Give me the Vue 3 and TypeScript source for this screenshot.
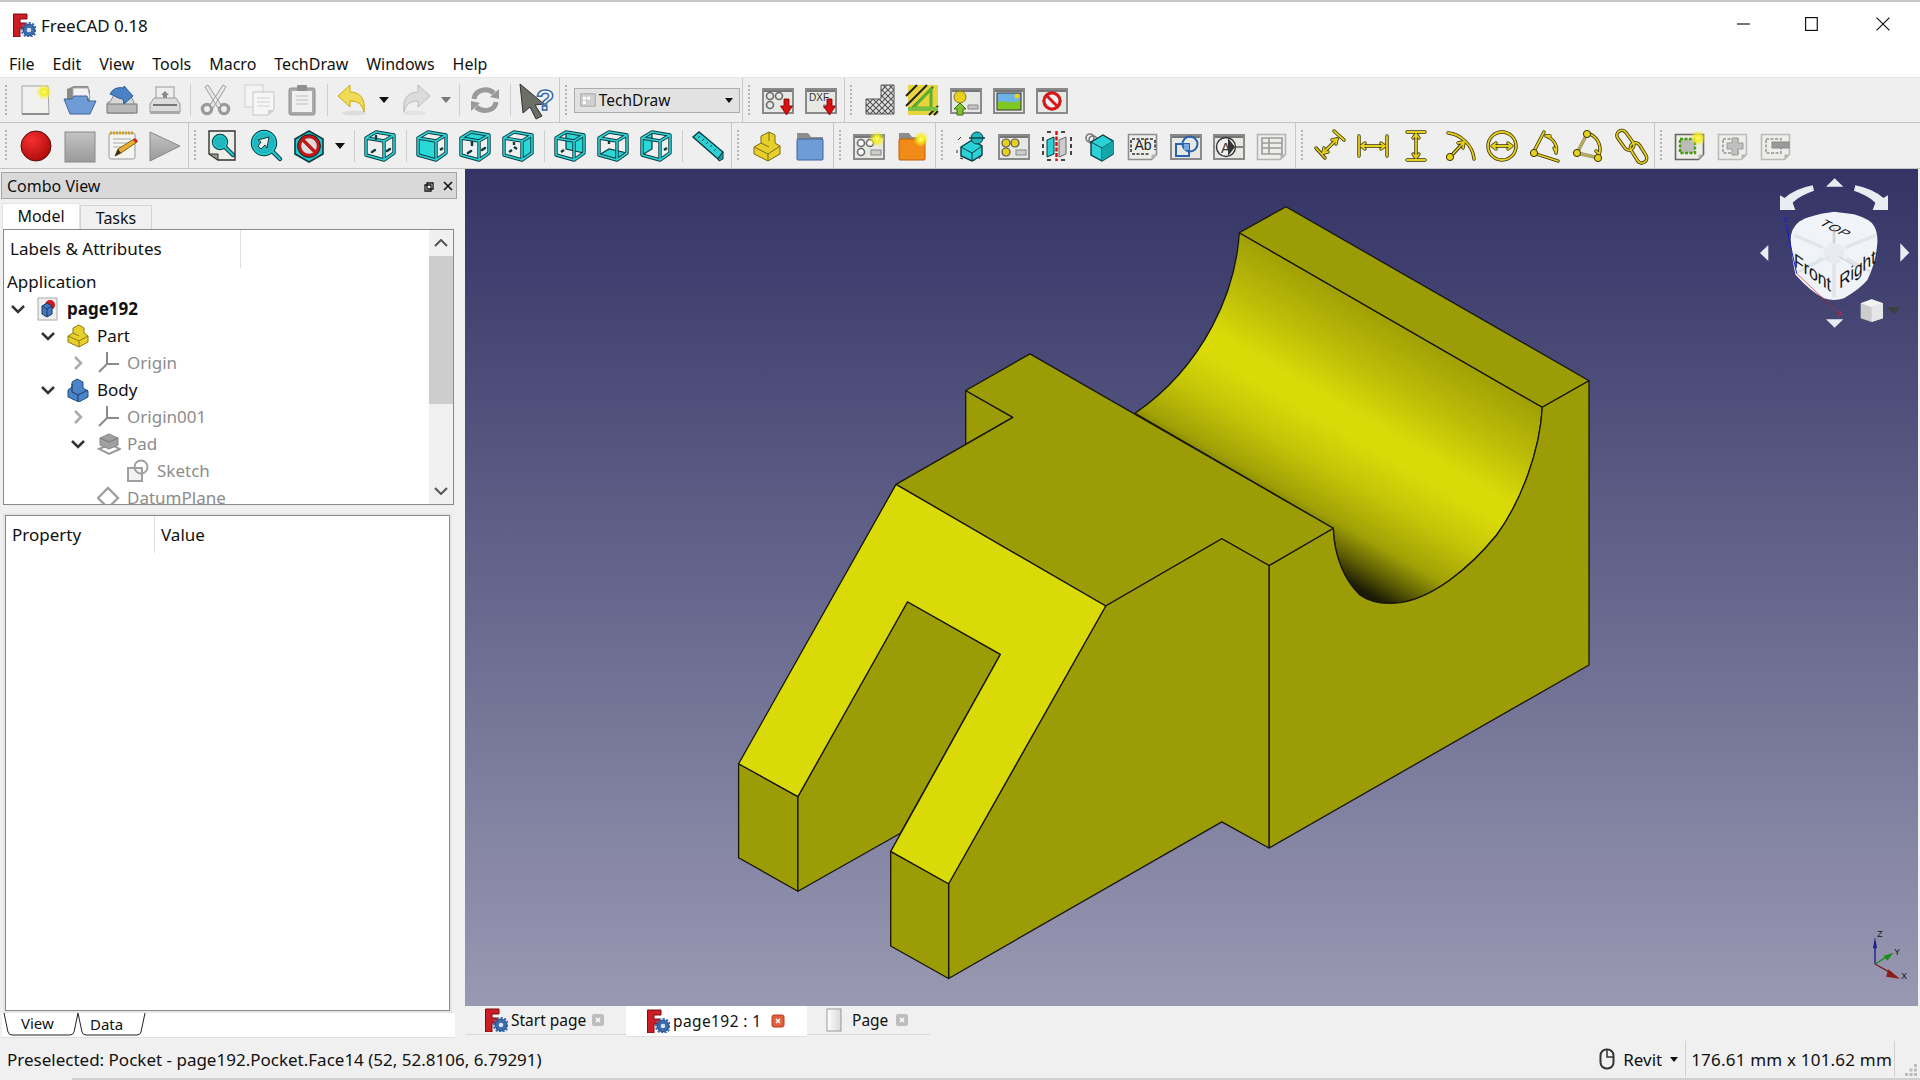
<script setup lang="ts">
// small icon helpers, all icons are drawn in a 32x32 box
const frame = (inner: string) =>
  `<rect x="1" y="5" width="30" height="24" fill="#e6e8e4" stroke="#8a8a8a" stroke-width="2"/><rect x="2" y="6" width="28" height="2" fill="#777"/>${inner}`
const sheet = (inner: string, stroke = '#8f8f8f') =>
  `<path d="M1.5 4.5h28v20l-5 5h-23z" fill="#eceeea" stroke="${stroke}" stroke-width="1.6"/><path d="M24.5 29.5v-5h5z" fill="#b5b5b5"/>${inner}`
const glow = (x: number, y: number) => `<circle cx="${x}" cy="${y}" r="8" fill="url(#gGlow)"/>`
const dims = (inner: string) => `<g fill="none" stroke="#3a3200" stroke-width="3.4" stroke-linecap="round" stroke-linejoin="round">${inner}</g><g fill="none" stroke="#e6d020" stroke-width="1.8" stroke-linecap="round" stroke-linejoin="round">${inner}</g>`
const redArrow = (x: number) => `<path d="M${x - 2} 15h5v7h3.5l-6 9-6-9h3.500z" fill="#d81010" stroke="#700" stroke-width=".8"/>`
const folder = (body: string, edge: string) =>
  `<path d="M3 3h10l3 4h11v22H3z" fill="#8d8d8d"/><rect x="3" y="9" width="26" height="21" rx="1" fill="${body}" stroke="${edge}"/>`

const A = '2,8', B = '20,11', C = '30,5', D = '12,2', E = '2,25', F = '20,30', G = '30,23', H = '12,19'
const wire = `M${A}L${B}L${C}L${D}ZM${A}L${E}L${F}L${G}L${C}M${B}L${F}`
const box = (face?: string, hole = '') => `${face ? `<polygon points="${face}" fill="#2ad8d8" stroke="#0b3b3f" stroke-width="1.2"/>` : ''}
  <path d="${wire}" fill="none" stroke="#0b3b3f" stroke-width="3.4" stroke-linejoin="round"/>
  <path d="${wire}" fill="none" stroke="#2cd4d6" stroke-width="1.6" stroke-linejoin="round"/>
  ${hole}`
const dashes = `<g stroke="#0b3b3f" stroke-width="2.6" stroke-linecap="round"><path d="M9 23l3-2M23 20l3-2M13 15v-3"/></g>`
const cyan = (s: string) => `<g fill="none" stroke="#0b3b3f" stroke-width="4.400" stroke-linecap="round">${s}</g><g fill="none" stroke="#22c8d0" stroke-width="2.400" stroke-linecap="round">${s}</g>`
const solid = `<path d="M7 12l12-7 10 6v13l-11 7-11-6z" fill="#2ad2d8" stroke="#0b3b3f" stroke-width="1.400"/><path d="M7 12l11 6 11-7M18 18v13" fill="none" stroke="#0b3b3f"/><path d="M18 18l11-7v13l-11 7z" fill="#14a4aa"/>`

const icons: Record<string, string> = {
  new: `<path d="M2 2h26l1 28H2z" fill="#f1f1ef" stroke="#a5a5a5"/><path d="M2 30h27" stroke="#777" stroke-width="1.500"/>${glow(24, 8)}`,
  open: `<path d="M4 5l7-3h14l2 5v11H4z" fill="#8a8a8a"/><path d="M10 4h15l2 10H10z" fill="#f4f4f4" stroke="#aaa"/><path d="M7 30L1 15h8l2-3h13l1 5h8l-6 13z" fill="#6f9bd6" stroke="#3f659a"/>`,
  save: `<path d="M4 18l5-9h14l5 9v11H2V18z" fill="#d8d8d8" stroke="#888"/><rect x="1" y="20" width="30" height="9" fill="#b8b8b8" stroke="#777"/><path d="M4 10Q8 2 18 4l0-2 9 10-9 8-1-5c-5 0-7-3-13-5z" fill="#4a82c6" stroke="#2a5a96"/>`,
  print: `<rect x="7" y="3" width="18" height="15" fill="#eee" stroke="#999"/><path d="M12 11l4-4 4 4h-2v4h-4v-4z" fill="#8a8a8a"/><path d="M1 20l4-6h22l4 6v8H1z" fill="#dcdcdc" stroke="#9a9a9a"/><path d="M4 21h24" stroke="#777" stroke-width="2"/><rect x="1" y="27" width="30" height="3" fill="#aaa"/>`,
  cut: `<g fill="none" stroke="#9b9b9b" stroke-width="3.400"><circle cx="7" cy="25" r="4.600"/><circle cx="24" cy="25" r="4.600"/></g><path d="M10 21L23 1 26 3 13 24zM21 21L8 1 5 3l13 21z" fill="#e8e8e8" stroke="#9b9b9b"/>`,
  copy: `<rect x="2" y="1" width="18" height="22" fill="#f4f4f4" stroke="#cfcfcf"/><path d="M10 8h21v18l-6 5H10z" fill="#f6f6f6" stroke="#c4c4c4"/><path d="M14 14h13M14 18h13M14 22h13" stroke="#d2d2d2"/><path d="M25 31v-5h6z" fill="#cfcfcf"/>`,
  paste: `<rect x="3" y="4" width="26" height="27" rx="2" fill="#aaa" stroke="#8e8e8e"/><rect x="6" y="7" width="20" height="21" fill="#f0f0f0"/><rect x="11" y="1" width="10" height="6" rx="1" fill="#8f8f8f"/><path d="M10 12h12M10 16h12M10 20h12" stroke="#bdbdbd"/>`,
  undo: `<ellipse cx="17" cy="29" rx="12" ry="2.500" fill="#ddd"/><path d="M1 12L13 1v7c10 0 16 7 14 20-2-8-6-11-14-11v6z" fill="#f0dc54" stroke="#c9aa10"/>`,
  redo: `<ellipse cx="15" cy="29" rx="12" ry="2.500" fill="#e4e4e4"/><path d="M31 12L19 1v7C9 8 3 15 5 28c2-8 6-11 14-11v6z" fill="#dcdcdc" stroke="#bcbcbc"/>`,
  refresh: `<g fill="none" stroke="#9a9a9a" stroke-width="5"><path d="M5 15C6 6 18 3 25 9"/><path d="M27 18C26 27 14 29 7 23"/></g><path d="M21 13l9 2V5zM11 19l-9-2v10z" fill="#9a9a9a"/>`,
  what: `<path d="M0 0L24 20L15 21L22 32L16 35L10 23L3 29Z" fill="#6b6f68" stroke="#2f322e"/><text x="16" y="26" font-family="Liberation Sans" font-weight="700" font-size="30" fill="#fff" stroke="#3465a4" stroke-width="1.500">?</text>`,
  combo: `<rect x="1" y="1" width="20" height="17" fill="#cfcfcf" stroke="#999"/><path d="M4 5h4v4H4zM10 5h4v4h-4zM4 11h4v4H4z" fill="#fff"/>`,
  svg: frame(`<g fill="none" stroke="#6a6a6a" stroke-width="1.600"><circle cx="8" cy="12" r="3.500"/><circle cx="17" cy="12" r="3.500"/><circle cx="8" cy="21" r="3.500"/></g>${redArrow(24)}`),
  dxf: frame(`<text x="4" y="16.500" font-family="Liberation Sans" font-size="10" fill="#333">DXF</text><rect x="18" y="20" width="8" height="5" fill="#bbb"/>${redArrow(24)}`),
  hatch: `<path d="M17 1h13v29H2V15h15z" fill="url(#pHatch)" stroke="#555"/>`,
  geom: `<rect x="1" y="1" width="30" height="30" fill="#e8d43c"/><path d="M-1 22L20 1M5 24L26 3M-1 12L10 1M22 31l9-9M27 31l4-4" stroke="#222" stroke-width="2"/><path d="M6 24L24 5v19z" fill="none" stroke="#5ab030" stroke-width="3"/><rect x="1" y="23" width="30" height="4" fill="#7ac040"/>`,
  image: frame(`<circle cx="10" cy="13" r="6" fill="#e8d020" stroke="#8a7a10"/><path d="M10 19l6 6h-3v6H7v-6H4z" fill="#80c030" stroke="#3c6a10"/><path d="M18 21h10v4H18z" fill="#c4c4c4" stroke="#888"/>`),
  land: frame(`<rect x="4" y="9" width="24" height="17" fill="#6cb4e4"/><path d="M4 19c6-5 10 3 24-3v10H4z" fill="#80c820"/><circle cx="24" cy="12" r="2.500" fill="#f0d020"/><rect x="4" y="9" width="24" height="17" fill="none" stroke="#333"/>`),
  noimg: frame(`<circle cx="16" cy="17" r="9" fill="#f0f0f0" stroke="#8f0a0a" stroke-width="1"/><circle cx="16" cy="17" r="8" fill="none" stroke="#d81818" stroke-width="3"/><path d="M10 11l12 12" stroke="#d81818" stroke-width="3"/>`),
  record: `<circle cx="16" cy="16" r="15" fill="url(#gRed)" stroke="#5a0a0a" stroke-width="1"/>`,
  stop: `<rect x="2" y="2" width="30" height="30" fill="url(#gGray)" stroke="#8a8a8a"/>`,
  macro: `<rect x="3" y="3" width="26" height="26" rx="2" fill="#f4f4f0" stroke="#999"/><path d="M4 3h24" stroke="#c9a020" stroke-width="3" stroke-dasharray="2 1"/><path d="M7 9h18M7 13h14M7 17h10" stroke="#aaa"/><path d="M9 26l3-7L28 9l3 3-16 11z" fill="#e8b030" stroke="#8a5a10"/><path d="M27 10l3 3 2-2-3-3z" fill="#d02020"/><path d="M9 26l3-7 3 4z" fill="#333"/>`,
  play: `<path d="M1 2l30 14L1 31z" fill="url(#gGray)" stroke="#888"/>`,
  fitall: `<path d="M2 1h26v29H11l-9-6z" fill="#eceeea" stroke="#333" stroke-width="1.400"/><path d="M2 24h9v6z" fill="#999" stroke="#333"/>${cyan('<circle cx="13" cy="12" r="6" /><path d="M18 17l8 8"/>')}<circle cx="13" cy="12" r="5" fill="#22b8c0"/>`,
  fitsel: `${cyan('<circle cx="14" cy="13" r="11" /><path d="M22 21l8 8"/>')}<circle cx="14" cy="13" r="10" fill="#22b8c0"/><path d="M19 7L8 10l3 2-3 4 3 3 4-4 2 3z" fill="#eee" stroke="#0b3b3f"/>`,
  nodraw: `<path d="M16 1l14 8v15l-14 8-14-8V9z" fill="#26c8cc" stroke="#0b3b3f" stroke-width="1.600"/><circle cx="16" cy="16" r="9.500" fill="#ddd" stroke="#c01818" stroke-width="3.400"/><path d="M10 10l12 12" stroke="#c01818" stroke-width="3.400"/><circle cx="16" cy="16" r="11.400" fill="none" stroke="#1a1a1a"/>`,
  iso: box('', `<g stroke="#0b3b3f" stroke-width="2.400" stroke-linecap="round"><path d="M12 6v3M8 22l3-2M23 21l3-2"/></g>`),
  front: box(`${A} ${B} ${F} ${E}`, '<path d="M24 20l3-2" stroke="#0b3b3f" stroke-width="2.400"/>'),
  top: box(`${A} ${B} ${C} ${D}`, dashes),
  right: box(`${B} ${C} ${G} ${F}`, '<path d="M7 22l3-2M12 15v-3M15 19l-3-2" stroke="#0b3b3f" stroke-width="2.400"/>'),
  rear: box(`${D} ${C} ${G} ${H}`, '<path d="M7 22l3-2" stroke="#0b3b3f" stroke-width="2.400"/>'),
  bottom: box(`${E} ${F} ${G} ${H}`, '<path d="M12 14v-3" stroke="#0b3b3f" stroke-width="2.400"/>'),
  left: box(`${A} ${D} ${H} ${E}`, '<path d="M24 20l3-2" stroke="#0b3b3f" stroke-width="2.400"/>'),
  measure: `<path d="M1 7L7 2l24 20-5 7z" fill="#2ad2d8" stroke="#0b3b3f" stroke-width="1.400"/><path d="M8 6l-2 2M12 9l-2 2M16 12l-2 2M20 15l-2 2M24 19l-2 2" stroke="#0b3b3f"/><path d="M26 29l5-7v7l-4 2z" fill="#14a4aa" stroke="#0b3b3f"/>`,
  part: `<path d="M3 17l7-4V6l8-4 6 3v8l5 3v8l-12 7-14-7z" fill="#e8d02c" stroke="#7a6a10"/><path d="M3 17l14 7 12-8M17 24v7M10 13l8 4M18 2v9" fill="none" stroke="#7a6a10"/>`,
  group: `<path d="M3 3h11l3 4h12v23H3z" fill="#8d8d8d"/><rect x="3" y="9" width="26" height="21" rx="1" fill="#6f9bd6" stroke="#3f659a"/>`,
  page: frame(`<g fill="#fff" stroke="#6a6a6a" stroke-width="1.600"><circle cx="8" cy="13" r="3.500"/><circle cx="17" cy="13" r="3.500"/><circle cx="8" cy="22" r="3.500"/></g><rect x="18" y="20" width="10" height="5" fill="#ccc" stroke="#888"/>${glow(24, 9)}`),
  ofolder: folder('#f08a18', '#b8620c') + glow(25, 9),
  view: `<g stroke="#333" fill="#888"><path d="M3 10l3-3M5 28l3 1M16 30h4M24 29l2-3M2 20v3"/></g><path d="M6 17l11-7 10 6v9l-10 6-11-5z" fill="#2ad2d8" stroke="#0b3b3f" stroke-width="1.400"/><path d="M6 17l11 6 10-7M17 23v8" fill="none" stroke="#0b3b3f"/><circle cx="22" cy="8" r="6" fill="#22b8c0" stroke="#0b3b3f"/><path d="M14 8h16" stroke="#0b3b3f" stroke-width="1.400"/>`,
  annot: frame(`<g fill="#e8d020" stroke="#555" stroke-width="1.200"><circle cx="8" cy="13" r="4"/><circle cx="17" cy="13" r="4"/><circle cx="8" cy="22" r="4"/></g><rect x="18" y="20" width="10" height="5" fill="#ccc" stroke="#888"/>`),
  section: `<g fill="#444"><rect x="1" y="7" width="2" height="4"/><rect x="1" y="14" width="2" height="4"/><rect x="1" y="21" width="2" height="4"/><rect x="29" y="7" width="2" height="4"/><rect x="29" y="14" width="2" height="4"/><rect x="29" y="21" width="2" height="4"/><rect x="6" y="1" width="4" height="2"/><rect x="20" y="1" width="4" height="2"/><rect x="6" y="29" width="4" height="2"/><rect x="20" y="29" width="4" height="2"/></g><path d="M6 10l7-3v17l-7 3z" fill="#2ad2d8" stroke="#0b3b3f"/><path d="M18 10l7-3v17l-7 3z" fill="#ccc" stroke="#666"/><path d="M15.500 1v30" stroke="#d81010" stroke-width="2.400" stroke-dasharray="4 1.500"/>`,
  proj: `<g fill="none" stroke="#777" stroke-width="1.600"><circle cx="6" cy="8" r="4"/><circle cx="9" cy="10" r="4"/></g>${solid}`,
  text: sheet(`<text x="7.500" y="20" font-family="Liberation Sans" font-size="14" fill="#222">Ab</text><path d="M5 9h22M5 24h18M4 10v13M28 10v10" fill="none" stroke="#333" stroke-width="1.600" stroke-dasharray="3 1.500"/>`),
  clip: frame(`<path d="M6 14h13v12H6z" fill="none" stroke="#2a62b0" stroke-width="2"/><circle cx="20" cy="14" r="7.500" fill="none" stroke="#2a62b0" stroke-width="2"/><path d="M14 14h5v6h-5z" fill="#7aa8e0"/>`),
  balloon: frame(`<circle cx="13" cy="17" r="9.500" fill="#f0f0f0" stroke="#333" stroke-width="1.400"/><text x="8" y="22.500" font-family="Liberation Sans" font-size="14" fill="#333">A</text><path d="M15 8l7 9-7 9z" fill="#333"/><path d="M22 17h8" stroke="#555" stroke-width="1.400"/>`),
  table: sheet(`<path d="M6 8h20v16H6zM6 13h20M6 18h20M13 8v16" fill="none" stroke="#9a9a9a" stroke-width="1.600"/>`, '#b4b4b4'),
  length: dims('<path d="M2 24l9 10"  transform="translate(0 -6)"/><path d="M20 1l10 9"/><path d="M9 23L23 9"/><path d="M23 9l-5 1M23 9l-1 5M9 23l5-1M9 23l1-5"/>'),
  horiz: dims('<path d="M2 6v20M30 6v20M4 16h24M4 16l4-3M4 16l4 3M28 16l-4-3M28 16l-4 3"/>'),
  vert: dims('<path d="M7 2h18M7 30h18M16 4v24M16 4l-3 4M16 4l3 4M16 28l-3-4M16 28l3-4"/>'),
  radius: dims('<path d="M5 3c12 1 25 12 26 26"/><path d="M8 26L21 12M21 12l-6 1M21 12l-1 6"/>') + '<circle cx="7" cy="27" r="3.600" fill="#e6d020" stroke="#3a3200"/>',
  diam: dims('<circle cx="16" cy="16" r="14"/><path d="M6 16h20M6 16l4-3M6 16l4 3M26 16l-4-3M26 16l-4 3"/>'),
  angle: dims('<path d="M4 23L15 2M4 23l25 8M17 6c8 3 12 10 10 17M27 22l-2-4M17 6l4 0"/>') + '<circle cx="5" cy="23" r="3.600" fill="#e6d020" stroke="#3a3200"/>',
  angle3: dims('<path d="M5 23L15 4M5 23l22 5" stroke-opacity=".5"/><path d="M18 4c8 4 12 12 9 21M27 24l-3-3"/>') + '<g fill="#e6d020" stroke="#3a3200"><circle cx="15" cy="4" r="3.600"/><circle cx="5" cy="23" r="3.600"/><circle cx="26" cy="28" r="3.600"/></g>',
  link: dims('<rect x="-4" y="-10" width="10" height="22" rx="5" transform="translate(9 10) rotate(-36)"/><rect x="-5" y="-10" width="10" height="22" rx="5" transform="translate(23 22) rotate(-32)"/>'),
  clipnew: sheet(`<rect x="6" y="9" width="15" height="14" fill="#bcbcb8"/><rect x="6" y="9" width="15" height="14" fill="none" stroke="#4a9a10" stroke-width="2.400" stroke-dasharray="3 1.500"/>${glow(24, 8)}`, '#666'),
  clipadd: sheet(`<rect x="6" y="9" width="15" height="14" fill="none" stroke="#aaa" stroke-width="2" stroke-dasharray="3 1.500"/><path d="M15 8h6v5h5v6h-5v6h-6v-6h-5v-6h5z" fill="#c0c0c0" stroke="#9a9a9a"/>`, '#bbb'),
  clipdel: sheet(`<rect x="6" y="9" width="15" height="14" fill="none" stroke="#aaa" stroke-width="2" stroke-dasharray="3 1.500"/><rect x="12" y="12" width="17" height="6" fill="#9a9a9a" stroke="#888"/>`, '#bbb'),
  fc: `<path d="M1.500 1h13.500v5H8v4h6v5H8v9H1.500z" fill="#cc1c26" stroke="#7a0c12"/><circle cx="17" cy="17" r="5.800" fill="#3a6cb0" stroke="#2a4a80"/><circle cx="17" cy="17" r="7" fill="none" stroke="#3a6cb0" stroke-width="2.200" stroke-dasharray="2.200 1.400"/><circle cx="17" cy="17" r="2.300" fill="#d8e4f4"/>`,
  doc: `<rect x="1" y="1" width="19" height="22" fill="#eee" stroke="#aaa"/><circle cx="13" cy="8" r="5" fill="#d01818"/><path d="M5 9l5-3 5 3v8l-5 3-5-3z" fill="#3f78c0" stroke="#1f3a60"/><path d="M5 9l5 3 5-3M10 12v8" fill="none" stroke="#1f3a60"/>`,
  pt: `<path d="M1 12l5-3V4l6-3 5 3v5l4 3v6l-9 5-11-5z" fill="#e8d02c" stroke="#8a7a10"/><path d="M1 12l11 5 9-5M12 17v6M6 9l6 3" fill="none" stroke="#8a7a10"/>`,
  bd: `<path d="M1 12l4-3V4l5-3 6 3v6l5 3v6l-9 5-11-5z" fill="#4a84c8" stroke="#24507e"/><path d="M5 6v8l6 3 10-5M11 17v7" fill="none" stroke="#1f3a60"/>`,
  axes: `<g fill="none" stroke="#8a8a8a" stroke-width="2"><path d="M10 13V1M10 13H22M10 13L2 21"/></g>`,
  pad: `<path d="M2 17l11-5 10 5-11 5z" fill="none" stroke="#999" stroke-width="2"/><path d="M3 6l9-4 9 4v7l-9 4-9-4z" fill="#a0a0a0" stroke="#888"/><path d="M3 6l9 4 9-4" fill="none" stroke="#777"/>`,
  skt: `<rect x="1" y="9" width="14" height="13" fill="#f2f2f2" stroke="#a0a0a0" stroke-width="2"/><circle cx="14" cy="8" r="6.500" fill="none" stroke="#a0a0a0" stroke-width="2"/>`,
  datum: `<path d="M1 12L11 2l10 10-10 10z" fill="#fff" stroke="#a0a0a0" stroke-width="2.400"/>`,
  blank: `<rect x="2" y="1" width="14" height="22" fill="url(#gGray2)" stroke="#999"/>`,
  close: `<rect x="1" y="1" width="12" height="12" rx="2" fill="#bdbdbd"/><path d="M5 5l4 4M9 5l-4 4" stroke="#fff" stroke-width="1.500"/>`,
  closeOn: `<rect x="1" y="1" width="12" height="12" rx="2" fill="#e06040" stroke="#b83820"/><path d="M5 5l4 4M9 5l-4 4" stroke="#fff" stroke-width="1.500"/>`,
}

type Group = { items: string[]; last?: boolean }
const firstRow: Group[] = [
  { items: ['new', 'open', 'save', 'print', '|', 'cut', 'copy', 'paste', '|', 'undo', 'v', 'redo', 'w', '|', 'refresh', '|', 'what'] },
  { items: ['@combo'] },
  { items: ['svg', 'dxf'] },
  { items: ['hatch', 'geom', 'image', 'land', 'noimg'], last: true },
]
const secondRow: Group[] = [
  { items: ['record', 'stop', 'macro', 'play'] },
  { items: ['fitall', 'fitsel', 'nodraw', 'v', '|', 'iso', '|', 'front', 'top', 'right', '|', 'rear', 'bottom', 'left', '|', 'measure'] },
  { items: ['part', 'group'] },
  { items: ['page', 'ofolder'] },
  { items: ['view', 'annot', 'section', 'proj', 'text', 'clip', 'balloon', 'table'] },
  { items: ['length', 'horiz', 'vert', 'radius', 'diam', 'angle', 'angle3', 'link'] },
  { items: ['clipnew', 'clipadd', 'clipdel'], last: true },
]
const toolbars = [firstRow, secondRow]

const menus = ['File', 'Edit', 'View', 'Tools', 'Macro', 'TechDraw', 'Windows', 'Help']

const tree = [
  { label: 'page192', icon: 'doc', depth: 0, open: 'down', bold: true },
  { label: 'Part', icon: 'pt', depth: 1, open: 'down' },
  { label: 'Origin', icon: 'axes', depth: 2, open: 'right', dim: true },
  { label: 'Body', icon: 'bd', depth: 1, open: 'down' },
  { label: 'Origin001', icon: 'axes', depth: 2, open: 'right', dim: true },
  { label: 'Pad', icon: 'pad', depth: 2, open: 'down', dim: true },
  { label: 'Sketch', icon: 'skt', depth: 3, open: '', dim: true },
  { label: 'DatumPlane', icon: 'datum', depth: 2, open: '', dim: true },
]

const docTabs = [
  { label: 'Start page', icon: 'fc', close: 'close', cls: 'first' },
  { label: 'page192 : 1', icon: 'fc', close: 'closeOn', cls: 'on' },
  { label: 'Page', icon: 'blank', close: 'close', cls: 'plain' },
]
</script>

<template>
  <div class="app">
    <header class="title">
      <svg class="logo" viewBox="0 0 24 24" v-html="icons.fc"></svg>
      <span class="title-text">FreeCAD 0.18</span>
      <div class="win-btns">
        <svg viewBox="0 0 12 12"><path d="M0 6h11" stroke="#111" /></svg>
        <svg viewBox="0 0 12 12"><rect x=".5" y=".5" width="10" height="11" fill="none" stroke="#111" /></svg>
        <svg viewBox="0 0 12 12"><path d="M.5 .5l11 11M11.500 .5l-11 11" stroke="#111" /></svg>
      </div>
    </header>

    <nav class="menu">
      <span v-for="m in menus" :key="m">{{ m }}</span>
    </nav>

    <div v-for="(row, r) in toolbars" :key="r" class="toolbar" :class="'row' + r">
      <div v-for="(g, i) in row" :key="i" class="tgroup" :class="{ last: g.last }">
        <i class="handle"></i>
        <template v-for="(it, n) in g.items" :key="n">
          <i v-if="it === '|'" class="sep"></i>
          <span v-else-if="it === 'v' || it === 'w'" class="drop" :class="{ dim: it === 'w' }"></span>
          <div v-else-if="it === '@combo'" class="combo">
            <svg class="combo-ic" viewBox="0 0 22 19" v-html="icons.combo"></svg>
            <span>TechDraw</span>
            <b></b>
          </div>
          <span v-else class="tbtn"><svg viewBox="0 0 32 32" v-html="icons[it]"></svg></span>
        </template>
      </div>
    </div>

    <main class="main">
      <aside class="dock">
        <div class="dock-head">
          <span>Combo View</span>
          <svg class="dock-btns" viewBox="0 0 30 12">
            <path d="M3 3h6v6H3zM1 5h6v6H1z" fill="#fff" stroke="#111" stroke-width="1.300" />
            <path d="M20 2l8 8M28 2l-8 8" stroke="#111" stroke-width="1.600" />
          </svg>
        </div>
        <div class="dock-tabs">
          <span class="on">Model</span>
          <span>Tasks</span>
        </div>
        <section class="tree">
          <div class="tree-body">
            <div class="tree-head"><span>Labels &amp; Attributes</span></div>
            <div class="tree-row app-row"><span class="tree-label">Application</span></div>
            <div v-for="t in tree" :key="t.label" class="tree-row" :style="{ paddingLeft: 7 + t.depth * 30 + 'px' }">
              <svg class="chev" viewBox="0 0 14 14">
                <path v-if="t.open === 'down'" d="M1 4l6 6 6-6" fill="none" stroke="#333" stroke-width="2.500" />
                <path v-if="t.open === 'right'" d="M4 1l6 6-6 6" fill="none" stroke="#aaa" stroke-width="2.500" />
              </svg>
              <svg class="tree-ic" viewBox="0 0 24 24" v-html="icons[t.icon]"></svg>
              <span class="tree-label" :class="{ bold: t.bold, dim: t.dim }">{{ t.label }}</span>
            </div>
          </div>
          <div class="scroll">
            <svg viewBox="0 0 14 8"><path d="M1 7l6-6 6 6" fill="none" stroke="#555" stroke-width="2" /></svg>
            <div class="thumb"></div>
            <svg viewBox="0 0 14 8"><path d="M1 1l6 6 6-6" fill="none" stroke="#555" stroke-width="2" /></svg>
          </div>
        </section>
        <section class="props">
          <div class="props-head">
            <span class="p-name">Property</span>
            <span class="p-val">Value</span>
          </div>
        </section>
        <div class="prop-tabs">
          <svg viewBox="0 0 150 24" width="150" height="24">
            <path d="M2 0l4 19q1 3 4 3h58q3 0 4-3l4-19" fill="#fff" stroke="#222" />
            <path d="M76 0l4 19q1 3 4 3h51q3 0 4-3l4-19" fill="#fff" stroke="#222" />
            <text x="19" y="16" class="tab-txt">View</text>
            <text x="88" y="17" class="tab-txt">Data</text>
          </svg>
        </div>
      </aside>

      <div class="work">
        <div class="viewport">
          <svg class="scene" viewBox="465 169 1455 837">
            <defs>
              <linearGradient id="gCyl" gradientUnits="userSpaceOnUse" x1="1239.300" y1="232.700" x2="1110.300" y2="456.100">
                <stop offset="0" stop-color="#a0a006" />
                <stop offset=".2" stop-color="#bcbc08" />
                <stop offset=".38" stop-color="#dada08" />
                <stop offset=".47" stop-color="#dada08" />
                <stop offset=".62" stop-color="#c4c408" />
                <stop offset=".78" stop-color="#a0a006" />
                <stop offset=".88" stop-color="#5e5e04" />
                <stop offset=".96" stop-color="#1e1e04" />
                <stop offset="1" stop-color="#111" />
              </linearGradient>
              <radialGradient id="gGlow">
                <stop offset="0" stop-color="#fff6a0" />
                <stop offset=".35" stop-color="#f6ee20" />
                <stop offset="1" stop-color="#f6ee20" stop-opacity="0" />
              </radialGradient>
              <radialGradient id="gRed" cx=".35" cy=".3" r=".8">
                <stop offset="0" stop-color="#f63030" />
                <stop offset="1" stop-color="#a80808" />
              </radialGradient>
              <linearGradient id="gGray" x1="0" y1="0" x2="0" y2="1">
                <stop offset="0" stop-color="#c4c4c4" />
                <stop offset="1" stop-color="#9a9a9a" />
              </linearGradient>
              <linearGradient id="gGray2" x1="0" y1="0" x2="1" y2="0">
                <stop offset="0" stop-color="#fff" />
                <stop offset="1" stop-color="#d8d8d8" />
              </linearGradient>
              <pattern id="pHatch" width="6" height="6" patternUnits="userSpaceOnUse">
                <rect width="6" height="6" fill="#e4e4e4" />
                <path d="M0 0l6 6M6 0l-6 6" stroke="#555" stroke-width="1.200" />
              </pattern>
            </defs>

            <!-- the solid, faces first, coordinates are page pixels -->
            <g fill="#9c9c06" stroke="#16160a" stroke-width="1.300" stroke-linejoin="round">
              <path d="M1239.300 232.700C1236 290 1205 365 1135 413.300L1333.300 528.300C1334 555 1344 580 1360 595C1372 604 1388 604 1400 602.700C1432 598 1468 570 1496.700 535C1522 500 1540 450 1542.300 407.300Z" fill="url(#gCyl)" />
              <polygon points="1239.300,232.700 1286,206.700 1589,380.700 1542.300,407.300" />
              <path d="M1269 565.500L1333.300 528.300C1334 555 1344 580 1360 595C1372 604 1388 604 1400 602.700C1432 598 1468 570 1496.700 535C1522 500 1540 450 1542.300 407.300L1589 380.700V665L1269 848Z" />
              <polygon points="965.700,390.500 1012.900,417.400 965.700,444.400" />
              <polygon points="965.700,390.500 1030,353.900 1333.300,528.300 1269,565.500 1221.800,538.700 1105.700,606 896,484.400 1012.900,417.400" />
              <polygon points="1105.700,606 1221.800,538.700 1269,565.500 1269,848 1221.800,821.900 948.600,978.500 948.600,883.800" />
              <polygon points="738.600,763.800 797.900,796.600 797.900,891.300 738.600,857.700" />
              <polygon points="907.500,601.800 1000.400,654.400 900.400,833.300 797.900,891.300 797.900,796.600" />
              <polygon points="890.700,851.400 948.600,883.800 948.600,978.500 890.700,946" />
              <polygon fill="#dada08" points="896,484.400 1105.700,606 948.600,883.800 890.700,851.400 1000.400,654.400 907.500,601.800 797.900,796.600 738.600,763.800" />
            </g>

            <!-- nav cube -->
            <g transform="translate(1720 160) scale(.33333)">
              <g fill="#e9edf2">
                <polygon points="318,80 370,80 344,55" />
                <polygon points="145,255 145,303 120,279" />
                <polygon points="541,250 541,305 568,278" />
                <polygon points="318,478 370,478 344,503" />
                <path d="M278 76l4 16q-46 16-64 36l8 22h-46v-44l14 8q32-28 84-38z" />
                <path d="M406 76l-4 16q46 16 64 36l-8 22h46v-44l-14 8q-32-28-84-38z" />
              </g>
              <path d="M342 155l60 8q50 15 60 35q12 20 10 52q-5 60-30 110q-20 25-70 55q-30 10-60 0q-40-20-85-70q-10-40-15-105q0-35 25-55q30-20 105-30z" fill="#f0f3f7" />
              <path d="M342 258v-60M222 225l88 38M470 225l-95 38M342 300l0 112M235 335l75-40M450 335l-70-40" stroke="#dfe5eb" stroke-width="10" fill="none" />
              <circle cx="342" cy="280" r="32" fill="#e8ecf0" />
              <path d="M342 250v-45" stroke="#c8c8c8" stroke-width="4" />
              <path d="M230 340l98-50" stroke="#c8e4c0" stroke-width="2" />
              <path d="M358 290l50 30" stroke="#c8c8d0" stroke-width="3" />
              <g font-family="Liberation Sans" fill="#111">
                <text transform="matrix(.85 .42 -.75 .45 295 192)" font-size="44" letter-spacing="2">TOP</text>
                <text transform="matrix(.82 .57 0 1 222 318)" font-size="58">Front</text>
                <text transform="matrix(.8 -.6 0 1 358 388)" font-size="58">Right</text>
              </g>
              <path d="M198 195l32 145" stroke="#1818e0" stroke-width="3" />
              <path d="M230 340l110 105" stroke="#d81818" stroke-width="2" />
              <g font-family="Liberation Sans" font-size="24">
                <text x="188" y="186" fill="#1818d8">Z</text>
                <text x="350" y="468" fill="#e01818">X</text>
              </g>
              <path d="M422 430l33-12 34 12v45l-34 11-33-11z" fill="#ccc" />
              <path d="M422 430l33 12 34-12-34-12z" fill="#f2f2f2" />
              <path d="M455 442l34-12v45l-34 11z" fill="#e6e6e6" />
              <polygon points="500,442 543,442 522,462" fill="#3e3e3e" />
            </g>

            <!-- axis cross -->
            <g transform="translate(1500 900) scale(.33333)">
              <path d="M1125 192V125" stroke="#1c1c8c" stroke-width="4" />
              <path d="M1119 145l6-34 6 34z" fill="#1c1c8c" />
              <path d="M1125 192l42-26" stroke="#1c8c1c" stroke-width="4" />
              <path d="M1150 168l30-10-18 24z" fill="#1c8c1c" />
              <path d="M1125 192l50 28" stroke="#7c1c1c" stroke-width="4" />
              <path d="M1165 208l35 28-42-6z" fill="#8c1c1c" />
              <g font-family="Liberation Sans" font-size="26" fill="#111">
                <text x="1132" y="110">Z</text>
                <text x="1183" y="165">Y</text>
                <text x="1204" y="238">X</text>
              </g>
            </g>
          </svg>
        </div>
        <div class="doc-tabs">
          <div v-for="d in docTabs" :key="d.label" class="doc-tab" :class="d.cls">
            <svg class="doc-ic" viewBox="0 0 24 24" v-html="icons[d.icon]"></svg>
            <span>{{ d.label }}</span>
            <svg class="doc-x" viewBox="0 0 14 14" v-html="icons[d.close]"></svg>
          </div>
        </div>
      </div>
    </main>

    <footer class="status">
      <span>Preselected: Pocket - page192.Pocket.Face14 (52, 52.8106, 6.79291)</span>
      <div class="status-r">
        <svg class="mouse" viewBox="0 0 16 22">
          <rect x="1.500" y="1.500" width="13" height="19" rx="6" fill="none" stroke="#333" stroke-width="2" />
          <path d="M8 2v7h6" fill="none" stroke="#333" stroke-width="1.500" />
        </svg>
        <span>Revit</span>
        <b class="status-drop"></b>
        <i class="vbar"></i>
        <span class="size">176.61 mm x 101.62 mm</span>
        <i class="vbar"></i>
        <svg class="grip" viewBox="0 0 12 12">
          <path d="M9 0h3v3H9zM4.500 4.500h3v3h-3zM9 4.500h3v3H9zM0 9h3v3H0zM4.500 9h3v3h-3zM9 9h3v3H9z" fill="#bbb" />
        </svg>
      </div>
    </footer>
  </div>
</template>

<style>
html,
body {
  margin: 0;
  padding: 0;
  background: #f0f0f0;
  overflow: hidden;
}
</style>

<style scoped>
.app {
  width: 1920px;
  height: 1080px;
  display: flex;
  flex-direction: column;
  font-family: 'Noto Sans', sans-serif;
  color: #111;
  background: #f0f0f0;
  overflow: hidden;
  position: relative;
}

.title {
  height: 48px;
  box-sizing: border-box;
  border-top: 2px solid #c8c8c8;
  background: #fff;
  display: flex;
  align-items: center;
  padding-left: 12px;
}

.logo {
  width: 24px;
  height: 24px;
  margin-top: -1px;
}

.title-text {
  margin-left: 5px;
  font-size: 17px;
}

.win-btns {
  margin-left: auto;
  display: flex;
  gap: 57px;
  padding-right: 30px;
  margin-top: -2px;
}

.win-btns svg {
  width: 14px;
  height: 14px;
  overflow: visible;
}

.win-btns svg:first-child {
  margin-right: -3px;
}

.menu {
  height: 30px;
  background: #fff;
  display: flex;
  align-items: center;
  gap: 18px;
  padding: 2px 0 0 9px;
  font-size: 16px;
  border-bottom: 1px solid #e6e6e6;
  box-sizing: border-box;
}

.toolbar {
  display: flex;
  background: #efefef;
  border-bottom: 1px solid #c4c4c4;
  box-sizing: border-box;
}

.row0 {
  height: 45px;
}

.row1 {
  height: 46px;
}

.tgroup {
  display: flex;
  align-items: center;
  position: relative;
  padding: 0 1.500px 0 13.300px;
  border-right: 1px solid #c8c8c8;
}

.tgroup:first-child {
  padding-left: 14px;
}

.tgroup.last {
  border-right: 0;
}

.handle {
  position: absolute;
  left: 5px;
  top: 7px;
  bottom: 7px;
  width: 2px;
  background: repeating-linear-gradient(to bottom, #b4b4b4 0 2px, transparent 2px 4px);
}

.tbtn {
  width: 43px;
  height: 32px;
  display: flex;
  justify-content: center;
}

.tbtn svg {
  width: 32px;
  height: 32px;
  overflow: visible;
}

.sep {
  width: 1px;
  height: 32px;
  margin: 0 4px;
  background: #cfcfcf;
}

.row0 .sep {
  margin: 0 3.500px;
}

.drop {
  width: 19px;
  display: flex;
  justify-content: center;
}

.drop::after {
  content: '';
  border: 5.500px solid transparent;
  border-top: 6px solid #111;
  border-bottom: 0;
}

.drop.dim::after {
  border-top-color: #777;
}

.combo {
  width: 166px;
  height: 25px;
  margin: 0 1px;
  background: #e2e2e2;
  border: 1px solid #adadad;
  box-sizing: border-box;
  display: flex;
  align-items: center;
  padding-left: 5px;
  font-size: 15.500px;
  position: relative;
}

.combo-ic {
  width: 16px;
  height: 14px;
  margin-right: 3px;
}

.combo b {
  position: absolute;
  right: 6px;
  top: 9px;
  border: 4px solid transparent;
  border-top: 5px solid #111;
  border-bottom: 0;
}

.main {
  flex: 1;
  display: flex;
  min-height: 0;
}

.dock {
  width: 465px;
  flex: none;
  display: flex;
  flex-direction: column;
  position: relative;
}

.dock-head {
  margin: 3px 8px 0 1px;
  height: 27px;
  box-sizing: border-box;
  background: #d9d9d9;
  border: 1px solid #a4a4a4;
  display: flex;
  align-items: center;
  justify-content: space-between;
  padding-left: 5px;
  font-size: 16px;
}

.dock-btns {
  width: 30px;
  height: 12px;
  margin-right: 2px;
}

.dock-tabs {
  display: flex;
  height: 29px;
  align-items: flex-end;
  padding-left: 2px;
  font-size: 16px;
  margin-top: 1px;
}

.dock-tabs span {
  width: 72px;
  height: 24px;
  box-sizing: border-box;
  text-align: center;
  line-height: 24px;
  background: #f0f0f0;
  border: 1px solid #d4d4d4;
  border-bottom: 0;
}

.dock-tabs .on {
  width: 78px;
  height: 26px;
  line-height: 24px;
  background: #fff;
  border-color: #e4e4e4;
}

.tree {
  margin: 0 11px 0 3px;
  height: 276px;
  box-sizing: border-box;
  border: 1px solid #8a8a8a;
  background: #fff;
  display: flex;
  font-size: 17px;
  flex: none;
  overflow: hidden;
}

.tree-body {
  flex: 1;
  overflow: hidden;
}

.tree-head {
  height: 38px;
  display: flex;
  align-items: center;
}

.tree-head span {
  width: 237px;
  height: 100%;
  box-sizing: border-box;
  border-right: 1px solid #e0e0e0;
  line-height: 38px;
  padding-left: 6px;
}

.tree-row {
  height: 27px;
  display: flex;
  align-items: center;
}

.app-row {
  padding-left: 3px;
}

.chev {
  width: 14px;
  height: 14px;
  flex: none;
  margin-right: 12px;
}

.tree-ic {
  width: 24px;
  height: 24px;
  flex: none;
  margin-right: 6px;
}

.tree-label.bold {
  font-weight: 700;
}

.tree-label.dim {
  color: #8c8c8c;
}

.scroll {
  width: 24px;
  background: #f0f0f0;
  display: flex;
  flex-direction: column;
  align-items: center;
  justify-content: space-between;
  padding: 9px 0;
  position: relative;
  box-sizing: border-box;
}

.scroll svg {
  width: 14px;
  height: 8px;
}

.thumb {
  position: absolute;
  top: 26px;
  left: 0;
  right: 0;
  height: 148px;
  background: #cdcdcd;
}

.props {
  margin: 10px 15px 0 5px;
  flex: 1;
  min-height: 0;
  background: #fff;
  border: 1px solid #8a8a8a;
  box-shadow: 0 0 0 2px #e6e6e6;
  font-size: 17px;
}

.props-head {
  height: 37px;
  display: flex;
  align-items: center;
}

.p-name {
  width: 149px;
  height: 100%;
  box-sizing: border-box;
  padding-left: 6px;
  line-height: 37px;
  border-right: 1px solid #e0e0e0;
}

.p-val {
  padding-left: 6px;
}

.prop-tabs {
  height: 24px;
  margin: 2px 10px 2px 2px;
  background: #fff;
  flex: none;
  border-bottom: 1px solid #e0e0e0;
}

.tab-txt {
  font-family: 'Noto Sans', sans-serif;
  font-size: 15px;
  fill: #111;
}

.work {
  flex: 1;
  min-width: 0;
  display: flex;
  flex-direction: column;
  padding-right: 2px;
}

.viewport {
  height: 837px;
  position: relative;
  background: linear-gradient(to bottom, #333366, #9999b3);
  overflow: hidden;
}

.scene {
  position: absolute;
  left: 0;
  top: 0;
  width: 1455px;
  height: 837px;
}

.doc-tabs {
  flex: 1;
  display: flex;
  font-size: 15.500px;
  padding-left: 1px;
}

.doc-tab {
  height: 29px;
  display: flex;
  align-items: center;
  border-bottom: 1px solid #d8d8d8;
}

.doc-tab.first {
  width: 160px;
  box-sizing: border-box;
  padding-left: 18px;
}

.doc-tab.first .doc-x {
  margin-left: 5px;
}

.doc-tab.on {
  width: 181px;
  height: 31px;
  box-sizing: border-box;
  padding-left: 20px;
  background: #fff;
  border-bottom: 1px solid #e0e0e0;
  letter-spacing: .4px;
}

.doc-tab.plain {
  width: 123px;
  box-sizing: border-box;
  padding-left: 18px;
}

.doc-tab.plain .doc-x {
  margin-left: 7px;
}

.doc-ic {
  width: 24px;
  height: 24px;
  margin-right: 3px;
}

.doc-x {
  width: 14px;
  height: 14px;
  margin-left: 9px;
}

.status {
  height: 40px;
  display: flex;
  align-items: center;
  justify-content: space-between;
  padding: 0 0 2px 7px;
  box-sizing: border-box;
  font-size: 17px;
  position: relative;
}

.status::after {
  content: '';
  position: absolute;
  left: 72px;
  right: 0;
  bottom: 0;
  height: 2px;
  background: #d0d0d0;
}

.status-r {
  display: flex;
  align-items: center;
  height: 100%;
}

.size {
  letter-spacing: .2px;
}

.mouse {
  width: 16px;
  height: 22px;
  margin-right: 8px;
}

.status-drop {
  border: 4px solid transparent;
  border-top: 5px solid #111;
  border-bottom: 0;
  margin: 0 7px 0 8px;
}

.vbar {
  width: 1px;
  height: 36px;
  background: #d0d0d0;
  margin-right: 5px;
}

.vbar:last-of-type {
  margin-left: 2px;
}

.grip {
  width: 12px;
  height: 12px;
  align-self: flex-end;
  margin: 0 3px 2px 5px;
}
</style>
